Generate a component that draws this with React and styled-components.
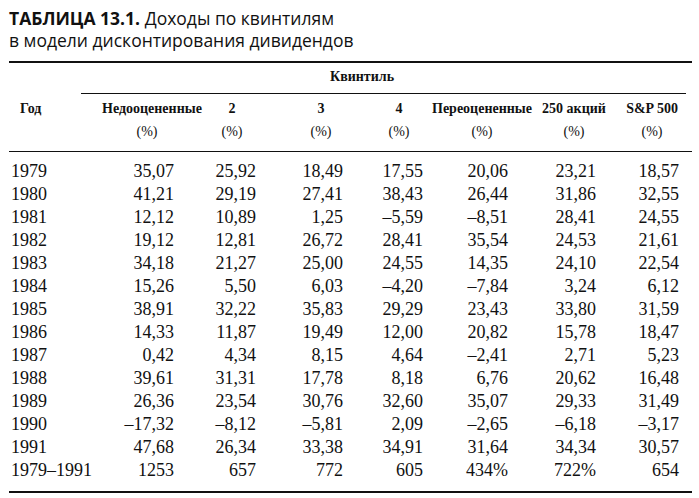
import React from 'react';
import styled, { createGlobalStyle } from 'styled-components';

const GlobalStyle = createGlobalStyle`
  body {
    margin: 0;
    background: #fff;
    color: #111;
  }
`;

const columns = [
  { label: 'Недооцененные', width: 90, pad: 18 },
  { label: '2', width: 80, pad: 16 },
  { label: '3', width: 98, pad: 27 },
  { label: '4', width: 58, pad: 5 },
  { label: 'Переоцененные', width: 108, pad: 28 },
  { label: '250 акций', width: 76, pad: 16 },
  { label: 'S&P 500', width: 80, pad: 13 },
];

const rows = [
  ['1979', '35,07', '25,92', '18,49', '17,55', '20,06', '23,21', '18,57'],
  ['1980', '41,21', '29,19', '27,41', '38,43', '26,44', '31,86', '32,55'],
  ['1981', '12,12', '10,89', '1,25', '–5,59', '–8,51', '28,41', '24,55'],
  ['1982', '19,12', '12,81', '26,72', '28,41', '35,54', '24,53', '21,61'],
  ['1983', '34,18', '21,27', '25,00', '24,55', '14,35', '24,10', '22,54'],
  ['1984', '15,26', '5,50', '6,03', '–4,20', '–7,84', '3,24', '6,12'],
  ['1985', '38,91', '32,22', '35,83', '29,29', '23,43', '33,80', '31,59'],
  ['1986', '14,33', '11,87', '19,49', '12,00', '20,82', '15,78', '18,47'],
  ['1987', '0,42', '4,34', '8,15', '4,64', '–2,41', '2,71', '5,23'],
  ['1988', '39,61', '31,31', '17,78', '8,18', '6,76', '20,62', '16,48'],
  ['1989', '26,36', '23,54', '30,76', '32,60', '35,07', '29,33', '31,49'],
  ['1990', '–17,32', '–8,12', '–5,81', '2,09', '–2,65', '–6,18', '–3,17'],
  ['1991', '47,68', '26,34', '33,38', '34,91', '31,64', '34,34', '30,57'],
  ['1979–1991', '1253', '657', '772', '605', '434%', '722%', '654'],
];

const App = () => {
  return (
    <Page>
      <GlobalStyle />
      <Caption>
        <CaptionNumber>ТАБЛИЦА 13.1.</CaptionNumber> Доходы по квинтилям
        <br />
        в модели дисконтирования дивидендов
      </Caption>

      <Table>
        <colgroup>
          <col style={{ width: 93 }} />
          {columns.map((c, i) => (
            <col key={i} style={{ width: c.width }} />
          ))}
        </colgroup>
        <thead>
          <tr>
            <GroupCell colSpan={8}>
              <GroupLabel>Квинтиль</GroupLabel>
              <GroupRule />
            </GroupCell>
          </tr>
          <tr>
            <HeadCell $year>Год</HeadCell>
            {columns.map((c, i) => (
              <HeadCell key={i}>
                {c.label}
                <Unit>(%)</Unit>
              </HeadCell>
            ))}
          </tr>
        </thead>
        <tbody>
          {rows.map((r, ri) => (
            <tr key={ri}>
              <YearCell $first={ri === 0} $last={ri === rows.length - 1}>
                {r[0]}
              </YearCell>
              {r.slice(1).map((v, ci) => (
                <ValueCell
                  key={ci}
                  $pad={columns[ci].pad}
                  $first={ri === 0}
                  $last={ri === rows.length - 1}
                >
                  {v}
                </ValueCell>
              ))}
            </tr>
          ))}
        </tbody>
      </Table>
    </Page>
  );
};

const Page = styled.div`
  width: 699px;
  height: 498px;
  padding: 7px 0 0 9px;
  box-sizing: border-box;
  overflow: hidden;
`;

const Caption = styled.div`
  font-family: 'Open Sans', 'Noto Sans', sans-serif;
  font-size: 17.5px;
  line-height: 22px;
  color: #111;
  margin-bottom: 10px;
`;

const CaptionNumber = styled.span`
  font-weight: 700;
`;

const Table = styled.table`
  width: 683px;
  table-layout: fixed;
  border-collapse: collapse;
  border-top: 2px solid #111;
  border-bottom: 2px solid #111;
  font-family: 'Liberation Serif', 'Times New Roman', serif;
  color: #111;
`;

const GroupCell = styled.th`
  padding: 2px 6px 0 72px;
  font-size: 14px;
  font-weight: 700;
  line-height: 23px;
`;

const GroupLabel = styled.div`
  text-align: left;
  padding-left: 249px;
`;

const GroupRule = styled.div`
  margin-top: 5px;
  border-top: 1px solid #111;
`;

const HeadCell = styled.th`
  padding: 3px 0 8px;
  padding-left: ${(p) => (p.$year ? '11px' : '0')};
  vertical-align: top;
  text-align: ${(p) => (p.$year ? 'left' : 'center')};
  font-size: 14px;
  font-weight: 700;
  line-height: 23px;
  white-space: nowrap;
  border-bottom: 1px solid #111;
`;

const Unit = styled.div`
  font-size: 14px;
  font-weight: 400;
`;

const BodyCell = styled.td`
  font-size: 18px;
  line-height: 23px;
  padding-top: ${(p) => (p.$first ? '8px' : '0')};
  padding-bottom: ${(p) => (p.$last ? '9px' : '0')};
  white-space: nowrap;
`;

const YearCell = styled(BodyCell)`
  text-align: left;
  padding-left: 2px;
`;

const ValueCell = styled(BodyCell)`
  text-align: right;
  padding-right: ${(p) => p.$pad}px;
`;

export default App;
